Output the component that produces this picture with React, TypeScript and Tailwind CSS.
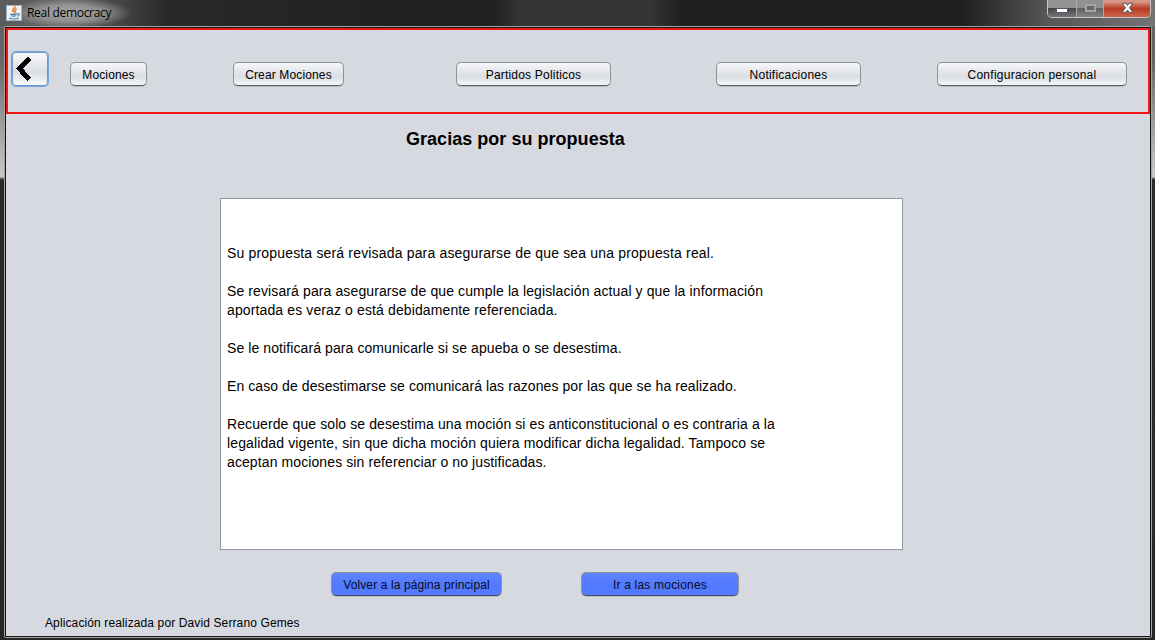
import React from "react";

const paragraphs: { text: string; tracking: string }[][] = [
  [{ text: "Su propuesta será revisada para asegurarse de que sea una propuesta real.", tracking: "tracking-[0.17px]" }],
  [
    { text: "Se revisará para asegurarse de que cumple la legislación actual y que la información", tracking: "tracking-[0.11px]" },
    { text: "aportada es veraz o está debidamente referenciada.", tracking: "tracking-[0.12px]" },
  ],
  [{ text: "Se le notificará para comunicarle si se apueba o se desestima.", tracking: "tracking-[0.09px]" }],
  [{ text: "En caso de desestimarse se comunicará las razones por las que se ha realizado.", tracking: "tracking-[0.08px]" }],
  [
    { text: "Recuerde que solo se desestima una moción si es anticonstitucional o es contraria a la", tracking: "tracking-[0.1px]" },
    { text: "legalidad vigente, sin que dicha moción quiera modificar dicha legalidad. Tampoco se", tracking: "tracking-[0.12px]" },
    { text: "aceptan mociones sin referenciar o no justificadas.", tracking: "tracking-[0.1px]" },
  ],
];

function NavButton({ label, className }: { label: string; className: string }) {
  return (
    <button
      className={`h-[24px] shrink-0 rounded-[5px] border border-[#8f9296] border-b-[#55585e] bg-linear-to-b from-[#f7f8fa] via-[#dadde2] via-60% to-[#f4f6f9] pt-[2px] text-[12px] whitespace-nowrap text-black shadow-[0_1px_0_#b9bcc3] ${className}`}
    >
      {label}
    </button>
  );
}

function BlueButton({ label, className }: { label: string; className: string }) {
  return (
    <button
      className={`h-[24px] shrink-0 rounded-[5px] border border-[#8f9296] border-b-[#444b62] bg-linear-to-b from-[#6084ff] via-[#5078ff] via-60% to-[#567dff] pt-[2px] text-[12px] whitespace-nowrap text-[#080d20] shadow-[0_1px_0_#b9bcc3] ${className}`}
    >
      {label}
    </button>
  );
}

function JavaIcon() {
  return (
    <svg className="ml-[6px] mt-[5px] size-4 shrink-0" viewBox="0 0 16 16" fill="none">
      <rect x=".5" y=".5" width="15" height="15" fill="#eef3f7" stroke="#9eb2c1" />
      <path d="M8.8 1.2c.8 2.2-2.8 2.7-2 4.5.3.8 1.2 1 1 2M10.6 3.8c-1 .7-2.1 1.3-1.3 2.3.5.8 0 1.1-.4 1.5" stroke="#ec8230" strokeWidth="1.7" />
      <path d="M4.2 8.9c1.8.6 4.8.5 6.7 0M5 10.7c1.6.5 3.8.5 5.3 0M3 13.1c2.3 1.3 7.4 1.2 9.8-.1M11.3 8.7c2.7-.5 2.3 2-.1 2.5" stroke="#48789f" strokeWidth="1.1" />
    </svg>
  );
}

function TitleBar() {
  return (
    <header className="flex h-[26px] shrink-0 items-start overflow-hidden bg-[radial-gradient(ellipse_62px_15px_at_70px_13px,#a6a6a6_0%,#a0a0a0c0_55%,#8880_100%),linear-gradient(90deg,#5c5c5c_0,#626262_70px,#484848_115px,#292929_165px,#202020_430px,#222_495px,#343434_520px,#353535_650px,#202020_680px,#1e1e1e_960px,#555_1045px,#747474_1155px)]">
      <JavaIcon />
      <div className="mt-[3px] ml-[5px] h-5 font-['Open_Sans',sans-serif] text-[12px] leading-5 tracking-[-0.3px] whitespace-nowrap text-black">
        Real democracy
      </div>
      <div className="mr-[4px] ml-auto flex h-[18px] w-[104px] overflow-hidden rounded-b-[5px] border border-t-0 border-[#c5c5c5]">
        <div className="flex w-[29px] justify-center border-r border-[#aaa] bg-linear-to-b from-[#929292] from-45% via-[#474747] via-50% to-[#777]">
          <span className="mt-[8px] h-[5px] w-[12px] rounded-[1px] border border-[#555966] bg-white" />
        </div>
        <div className="flex w-[27px] justify-center border-r border-[#aaa] bg-linear-to-b from-[#919191] from-45% via-[#626262] via-50% to-[#858585]">
          <span className="mt-[4px] h-[8px] w-[11px] border-2 border-[#a5a5a5] bg-[#666]" />
        </div>
        <div className="flex flex-1 justify-center bg-linear-to-b from-[#d59786] from-10% via-[#b63a22] via-50% to-[#ce654b]">
          <svg className="mt-[2px] h-[12px] w-[13px]" viewBox="0 0 13 12">
            <path d="M1.2 1.3h3.6l1.7 2.2 1.7-2.2h3.6L8.5 5.7l3.3 4.6H8.2L6.5 8.1l-1.7 2.2H1.2l3.3-4.6z" fill="#fff" stroke="#535766" />
          </svg>
        </div>
      </div>
    </header>
  );
}

export default function App() {
  return (
    <div className="flex h-[640px] w-[1155px] flex-col overflow-hidden bg-[linear-gradient(180deg,#626262_0,#666_60px,#c9c9c9_177px,#777_178px,#2a2a2a_180px,#272727_640px)] font-['Liberation_Sans',Arial,sans-serif] text-black">
      <TitleBar />
      <div className="ml-[4px] h-[612px] w-[1148px] rounded-[2px] border border-[#a4a4a4]">
        <main className="flex h-full flex-col border border-[#151515] bg-[#d6d9df]">
          <nav className="flex h-[86px] shrink-0 items-start border-2 border-[#f31414]">
            <button
              aria-label="Volver"
              className="mt-[22px] ml-[4px] h-[34px] w-[36px] shrink-0 rounded-[4px] border border-[#6a9bcb] bg-linear-to-b from-[#f8f9fb] via-[#dadde2] via-60% to-[#f7f9fb] shadow-[0_0_0_1px_#76a7d8]"
            >
              <svg className="-mt-px ml-[2px] h-[26px] w-[18px]" viewBox="0 0 18 26" fill="none">
                <path d="M14.5 2.2 4.3 12.7l10.2 10.5" stroke="#000" strokeWidth="5" shapeRendering="crispEdges" />
              </svg>
            </button>
            <NavButton label="Mociones" className="mt-[32px] ml-[22px] w-[77px] tracking-[0.14px]" />
            <NavButton label="Crear Mociones" className="mt-[32px] ml-[86px] w-[111px] tracking-[0.14px]" />
            <NavButton label="Partidos Politicos" className="mt-[32px] ml-[112px] w-[155px] tracking-[0.2px]" />
            <NavButton label="Notificaciones" className="mt-[32px] ml-[105px] w-[145px] tracking-[0.22px]" />
            <NavButton label="Configuracion personal" className="mt-[32px] ml-[76px] w-[190px] tracking-[0.25px]" />
          </nav>
          <h1 className="mt-[14px] ml-[400px] h-[22px] text-[18px] leading-[22px] font-bold tracking-[0.03px] whitespace-nowrap">
            Gracias por su propuesta
          </h1>
          <section className="mt-[48px] ml-[214px] flex h-[352px] w-[683px] shrink-0 flex-col gap-[19px] border border-[#9297a1] bg-white pt-[45px] pl-[6px] text-[14px] leading-[19px]">
            {paragraphs.map((lines) => (
              <p key={lines[0].text}>
                {lines.map((line) => (
                  <span key={line.text} className={`block whitespace-nowrap ${line.tracking}`}>
                    {line.text}
                  </span>
                ))}
              </p>
            ))}
          </section>
          <div className="mt-[22px] ml-[325px] flex gap-[79px]">
            <BlueButton label="Volver a la página principal" className="w-[171px] tracking-[0.11px]" />
            <BlueButton label="Ir a las mociones" className="w-[158px] tracking-[0.2px]" />
          </div>
          <footer className="mt-[19px] ml-[39px] text-[12px] leading-4 tracking-[0.12px] whitespace-nowrap">
            Aplicación realizada por David Serrano Gemes
          </footer>
        </main>
      </div>
    </div>
  );
}
